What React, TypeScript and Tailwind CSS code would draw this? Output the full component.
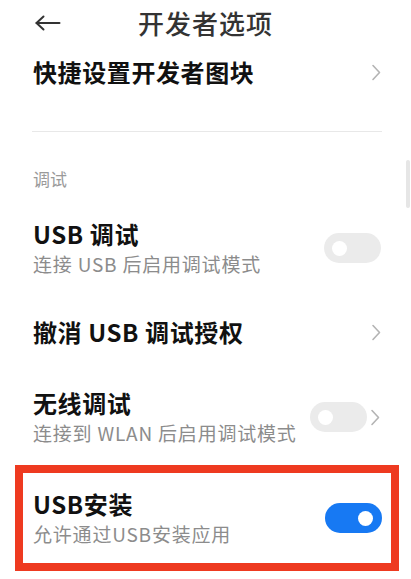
import React from 'react';

// ── Small pieces ────────────────────────────────────────────────────────────

function BackArrow() {
  return (
    <svg width="26" height="16" viewBox="0 0 26 16" fill="none" stroke="#333" strokeWidth="2" strokeLinecap="round" strokeLinejoin="round">
      <path d="M1.5 8 H24.5" />
      <path d="M8.5 1.5 L1.5 8 L8.5 14.5" />
    </svg>
  );
}

function Chevron() {
  return (
    <svg width="10" height="17" viewBox="0 0 10 17" fill="none" stroke="#b4b4b4" strokeWidth="1.6" strokeLinecap="round" strokeLinejoin="round">
      <path d="M2 1.5 L8.5 8.5 L2 15.5" />
    </svg>
  );
}

function Toggle({ on }: { on?: boolean }) {
  return (
    <div
      className={
        on
          ? 'w-[57px] h-[30px] rounded-full bg-[#1779f3] flex items-center justify-end pr-[9px]'
          : 'w-[57px] h-[30px] rounded-full bg-[#ebebeb] flex items-center pl-[8px]'
      }
    >
      <div className="w-[15px] h-[15px] rounded-full bg-white" />
    </div>
  );
}

function RowText({ title, sub }: { title: string; sub?: string }) {
  return (
    <div className="flex flex-col">
      <span className="text-[24px] leading-[30px] font-semibold text-[#111] tracking-[0.6px]">{title}</span>
      {sub && <span className="mt-[2px] text-[19px] leading-[26px] text-[#8c8c8c] tracking-[0.8px]">{sub}</span>}
    </div>
  );
}

// ── Page ────────────────────────────────────────────────────────────────────
export default function App() {
  return (
    <div
      className="relative w-[411px] h-[579px] overflow-hidden bg-white"
      style={{ fontFamily: '"Noto Sans CJK SC", "Noto Sans", sans-serif' }}
    >
      {/* Header */}
      <header className="h-[46px] grid grid-cols-[1fr_auto_1fr] items-center">
        <div className="pl-[35px] flex items-center">
          <BackArrow />
        </div>
        <h1 className="text-[26px] leading-[32px] font-medium text-[#333] tracking-[1px]">开发者选项</h1>
        <div />
      </header>

      {/* 快捷设置开发者图块 */}
      <div className="h-[52px] pl-[33px] pr-[30px] flex items-center justify-between">
        <span className="text-[24px] leading-[30px] font-semibold text-[#111] tracking-[0.6px]">快捷设置开发者图块</span>
        <Chevron />
      </div>

      <div className="mt-[33px] mx-[32px] mr-[29px] h-px bg-[#e8e8e8]" />

      {/* Section label */}
      <div className="mt-[37px] pl-[33px] text-[17px] leading-[20px] text-[#9a9a9a]">调试</div>

      {/* USB 调试 */}
      <div className="mt-[30px] pl-[33px] pr-[30px] flex items-center justify-between">
        <RowText title="USB 调试" sub="连接 USB 后启用调试模式" />
        <Toggle />
      </div>

      {/* 撤消 USB 调试授权 */}
      <div className="mt-[39px] h-[32px] pl-[33px] pr-[30px] flex items-center justify-between">
        <span className="text-[24px] leading-[30px] font-semibold text-[#111] tracking-[0.6px]">撤消 USB 调试授权</span>
        <Chevron />
      </div>

      {/* 无线调试 */}
      <div className="mt-[40px] pl-[33px] pr-[31px] flex items-center justify-between">
        <RowText title="无线调试" sub="连接到 WLAN 后启用调试模式" />
        <div className="flex items-center gap-[3px]">
          <Toggle />
          <Chevron />
        </div>
      </div>

      {/* USB安装 (highlighted) */}
      <div className="mt-[19px] ml-[15px] mr-[12px] h-[106px] border-[8px] border-[#ee3a20] pl-[10px] pr-[9px] flex items-center justify-between">
        <RowText title="USB安装" sub="允许通过USB安装应用" />
        <Toggle on />
      </div>

      {/* Scrollbar */}
      <div className="absolute left-[406px] top-[160px] w-[4px] h-[48px] rounded-full bg-[#e6e6e6]" />
    </div>
  );
}
